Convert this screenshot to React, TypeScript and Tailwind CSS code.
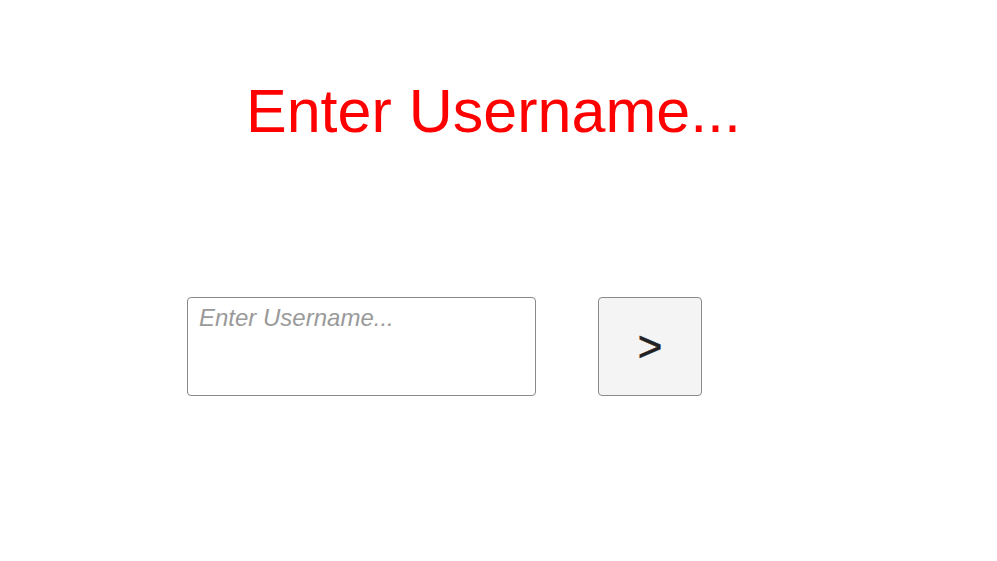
import React from "react";

export default function App() {
  return (
    <div className="w-[997px] h-[561px] bg-white flex flex-col font-['Liberation_Sans',Arial,sans-serif]">
      <h1 className="mt-[81px] ml-[246px] text-[61px] leading-[61px] text-[#ff0000] font-normal whitespace-nowrap">
        Enter Username...
      </h1>
      <div className="mt-[155px] ml-[187px] flex flex-row gap-[62px]">
        <textarea
          placeholder="Enter Username..."
          className="w-[349px] h-[99px] resize-none border border-[#8a8a8a] rounded-[4px] pl-[11px] pt-[6px] font-['Liberation_Sans',Arial,sans-serif] text-[24px] leading-[28px] text-[#333] placeholder:text-[#9a9a9a] placeholder:italic outline-none bg-white"
        />
        <button className="w-[104px] h-[99px] border border-[#8a8a8a] rounded-[4px] bg-[#f4f4f4] text-[#222] font-['Liberation_Sans',Arial,sans-serif] text-[42px] leading-none flex items-center justify-center [-webkit-text-stroke:0.6px_#222]">
          &gt;
        </button>
      </div>
    </div>
  );
}
